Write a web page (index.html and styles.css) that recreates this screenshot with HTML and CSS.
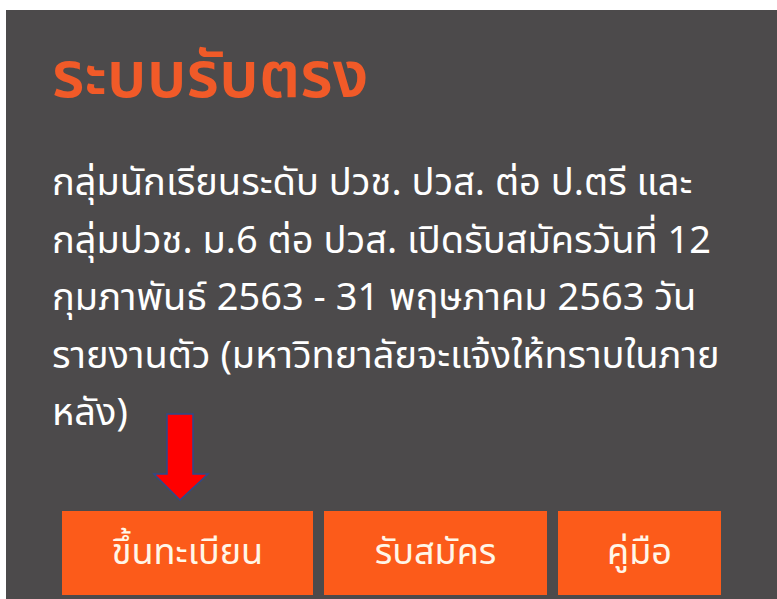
FILE: index.html
```html
<!DOCTYPE html>
<html lang="th">
<head>
<meta charset="utf-8">
<title>ระบบรับตรง</title>
<link rel="stylesheet" href="styles.css">
</head>
<body>
<section class="panel">
  <h2 class="panel-title">ระบบรับตรง</h2>
  <p class="panel-text">กลุ่มนักเรียนระดับ ปวช. ปวส. ต่อ ป.ตรี และ<br>กลุ่มปวช. ม.6 ต่อ ปวส. เปิดรับสมัครวันที่ 12<br>กุมภาพันธ์ 2563 - 31 พฤษภาคม 2563 วัน<br>รายงานตัว (มหาวิทยาลัยจะแจ้งให้ทราบในภาย<br>หลัง)</p>
  <div class="actions">
    <a class="btn btn-register" href="#">ขึ้นทะเบียน
      <svg class="arrow" width="58" height="90" viewBox="0 0 58 90" aria-hidden="true">
        <polygon points="15,1 41,1 41,61 56,61 28,87 2,61 15,61" fill="#ff0000" stroke="#2c4a8c" stroke-width="1.5"/>
      </svg>
    </a>
    <a class="btn btn-apply" href="#">รับสมัคร</a>
    <a class="btn btn-guide" href="#">คู่มือ</a>
  </div>
</section>
</body>
</html>
```

FILE: styles.css
```css
html, body {
  margin: 0;
  background: #ffffff;
}

body {
  padding: 10px 0 0 6px;
  overflow: hidden;
  font-family: "Noto Sans Thai", "Noto Sans", "DejaVu Sans", sans-serif;
}

.panel {
  background: #4c4a4b;
  min-height: 600px;
  padding: 28px 0 0 46px;
  box-sizing: border-box;
}

.panel-title {
  margin: 0;
  color: #f15a28;
  font-size: 64px;
  font-weight: 600;
  line-height: 80px;
}

.panel-text {
  margin: 37px 0 0;
  color: #ffffff;
  font-size: 38px;
  line-height: 57.5px;
  white-space: nowrap;
}

.actions {
  display: flex;
  gap: 11px;
  margin: 68px 0 0 10px;
}

.btn {
  position: relative;
  display: flex;
  align-items: center;
  justify-content: center;
  height: 84px;
  background: #fc5b1a;
  color: #fff6e8;
  font-size: 36px;
  text-decoration: none;
}

.btn-register { width: 251px; }
.btn-apply { width: 223px; }
.btn-guide { width: 163px; }

.arrow {
  position: absolute;
  left: 90px;
  top: -98px;
}
```
